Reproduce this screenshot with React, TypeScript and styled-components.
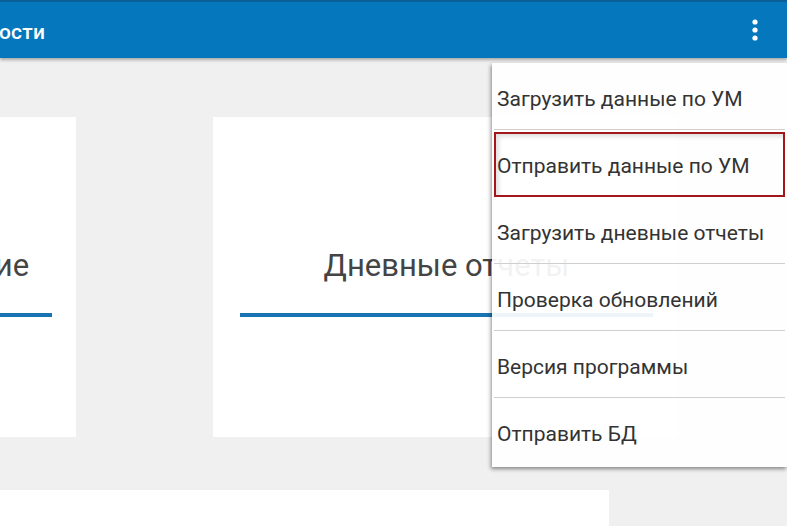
import React from "react";
import styled, { createGlobalStyle } from "styled-components";

const GlobalStyle = createGlobalStyle`
  html, body {
    margin: 0;
    padding: 0;
    width: 787px;
    height: 526px;
    overflow: hidden;
    background: #f0f0f0;
    font-family: Roboto, "Noto Sans", sans-serif;
  }
`;

interface IItem {
  focused?: boolean;
  last?: boolean;
}

const Screen = styled.div`
  position: relative;
  width: 787px;
  height: 526px;
  overflow: hidden;
  background: #f0f0f0;
`;

const AppBar = styled.header`
  height: 56px;
  background-color: #0577bd;
  border-top: 2px solid #0b5f98;
  display: flex;
  align-items: center;
  justify-content: space-between;
  box-shadow: 0 2px 3px rgba(0, 0, 0, 0.3);
  position: relative;
  z-index: 2;
`;

const Title = styled.h1`
  margin: 3px 0 0 -1px;
  color: white;
  font-size: 21px;
  font-weight: 500;
  letter-spacing: 0.2px;
`;

const MoreButton = styled.div`
  width: 40px;
  height: 40px;
  margin-right: 12px;
  display: flex;
  align-items: center;
  justify-content: center;
`;

const Content = styled.main`
  padding-top: 59px;
  margin-left: -388px;
  display: flex;
  flex-direction: column;
  gap: 53px;
`;

const CardRow = styled.div`
  display: flex;
  gap: 137px;
`;

const Card = styled.div`
  width: 464px;
  height: 320px;
  background: white;
  display: flex;
  flex-direction: column;
  align-items: center;
  padding: 129px 24px 0 27px;
  box-sizing: border-box;
`;

const CardTitle = styled.div`
  font-size: 31px;
  color: #444;
  line-height: 40px;
  white-space: nowrap;
`;

const Underline = styled.div`
  align-self: stretch;
  height: 4px;
  background: #1a74b4;
  margin-top: 27px;
`;

const WideCard = styled.div`
  width: 997px;
  height: 60px;
  background: white;
`;

const Menu = styled.ul`
  position: absolute;
  top: 63px;
  right: 0;
  width: 295px;
  margin: 0;
  padding: 0 2px 2px;
  box-sizing: border-box;
  list-style: none;
  background: rgba(255, 255, 255, 0.93);
  box-shadow: -1px 2px 4px rgba(0, 0, 0, 0.45);
  z-index: 3;
`;

const MenuItem = styled.li<IItem>`
  height: ${(p) => (p.focused ? "65px" : "67px")};
  margin: ${(p) => (p.focused ? "2px 0 0" : "0")};
  display: flex;
  align-items: center;
  padding-top: ${(p) => (p.focused ? "2px" : "5px")};
  padding-left: ${(p) => (p.focused ? "1px" : "3px")};
  font-size: 21px;
  color: #333;
  box-sizing: border-box;
  border-bottom: ${(p) => (p.last || p.focused ? "none" : "1px solid #cfcfcf")};
  border: ${(p) => (p.focused ? "2px solid #a3161b" : undefined)};
  box-shadow: ${(p) =>
    p.focused ? "inset 3px 3px 4px rgba(0,0,0,0.12)" : "none"};
`;

const items = [
  "Загрузить данные по УМ",
  "Отправить данные по УМ",
  "Загрузить дневные отчеты",
  "Проверка обновлений",
  "Версия программы",
  "Отправить БД",
];

const App = () => {
  return (
    <Screen>
      <GlobalStyle />
      <AppBar>
        <Title>ости</Title>
        <MoreButton>
          <svg width="8" height="24" viewBox="0 0 8 24">
            <circle cx="4" cy="4" r="2.6" fill="white" />
            <circle cx="4" cy="12" r="2.6" fill="white" />
            <circle cx="4" cy="20" r="2.6" fill="white" />
          </svg>
        </MoreButton>
      </AppBar>
      <Content>
        <CardRow>
          <Card>
            <CardTitle>Приходы и перемещение</CardTitle>
            <Underline />
          </Card>
          <Card>
            <CardTitle>Дневные отчеты</CardTitle>
            <Underline />
          </Card>
        </CardRow>
        <WideCard />
      </Content>
      <Menu>
        {items.map((text, i) => (
          <MenuItem key={text} focused={i === 1} last={i === items.length - 1}>
            {text}
          </MenuItem>
        ))}
      </Menu>
    </Screen>
  );
};

export default App;
